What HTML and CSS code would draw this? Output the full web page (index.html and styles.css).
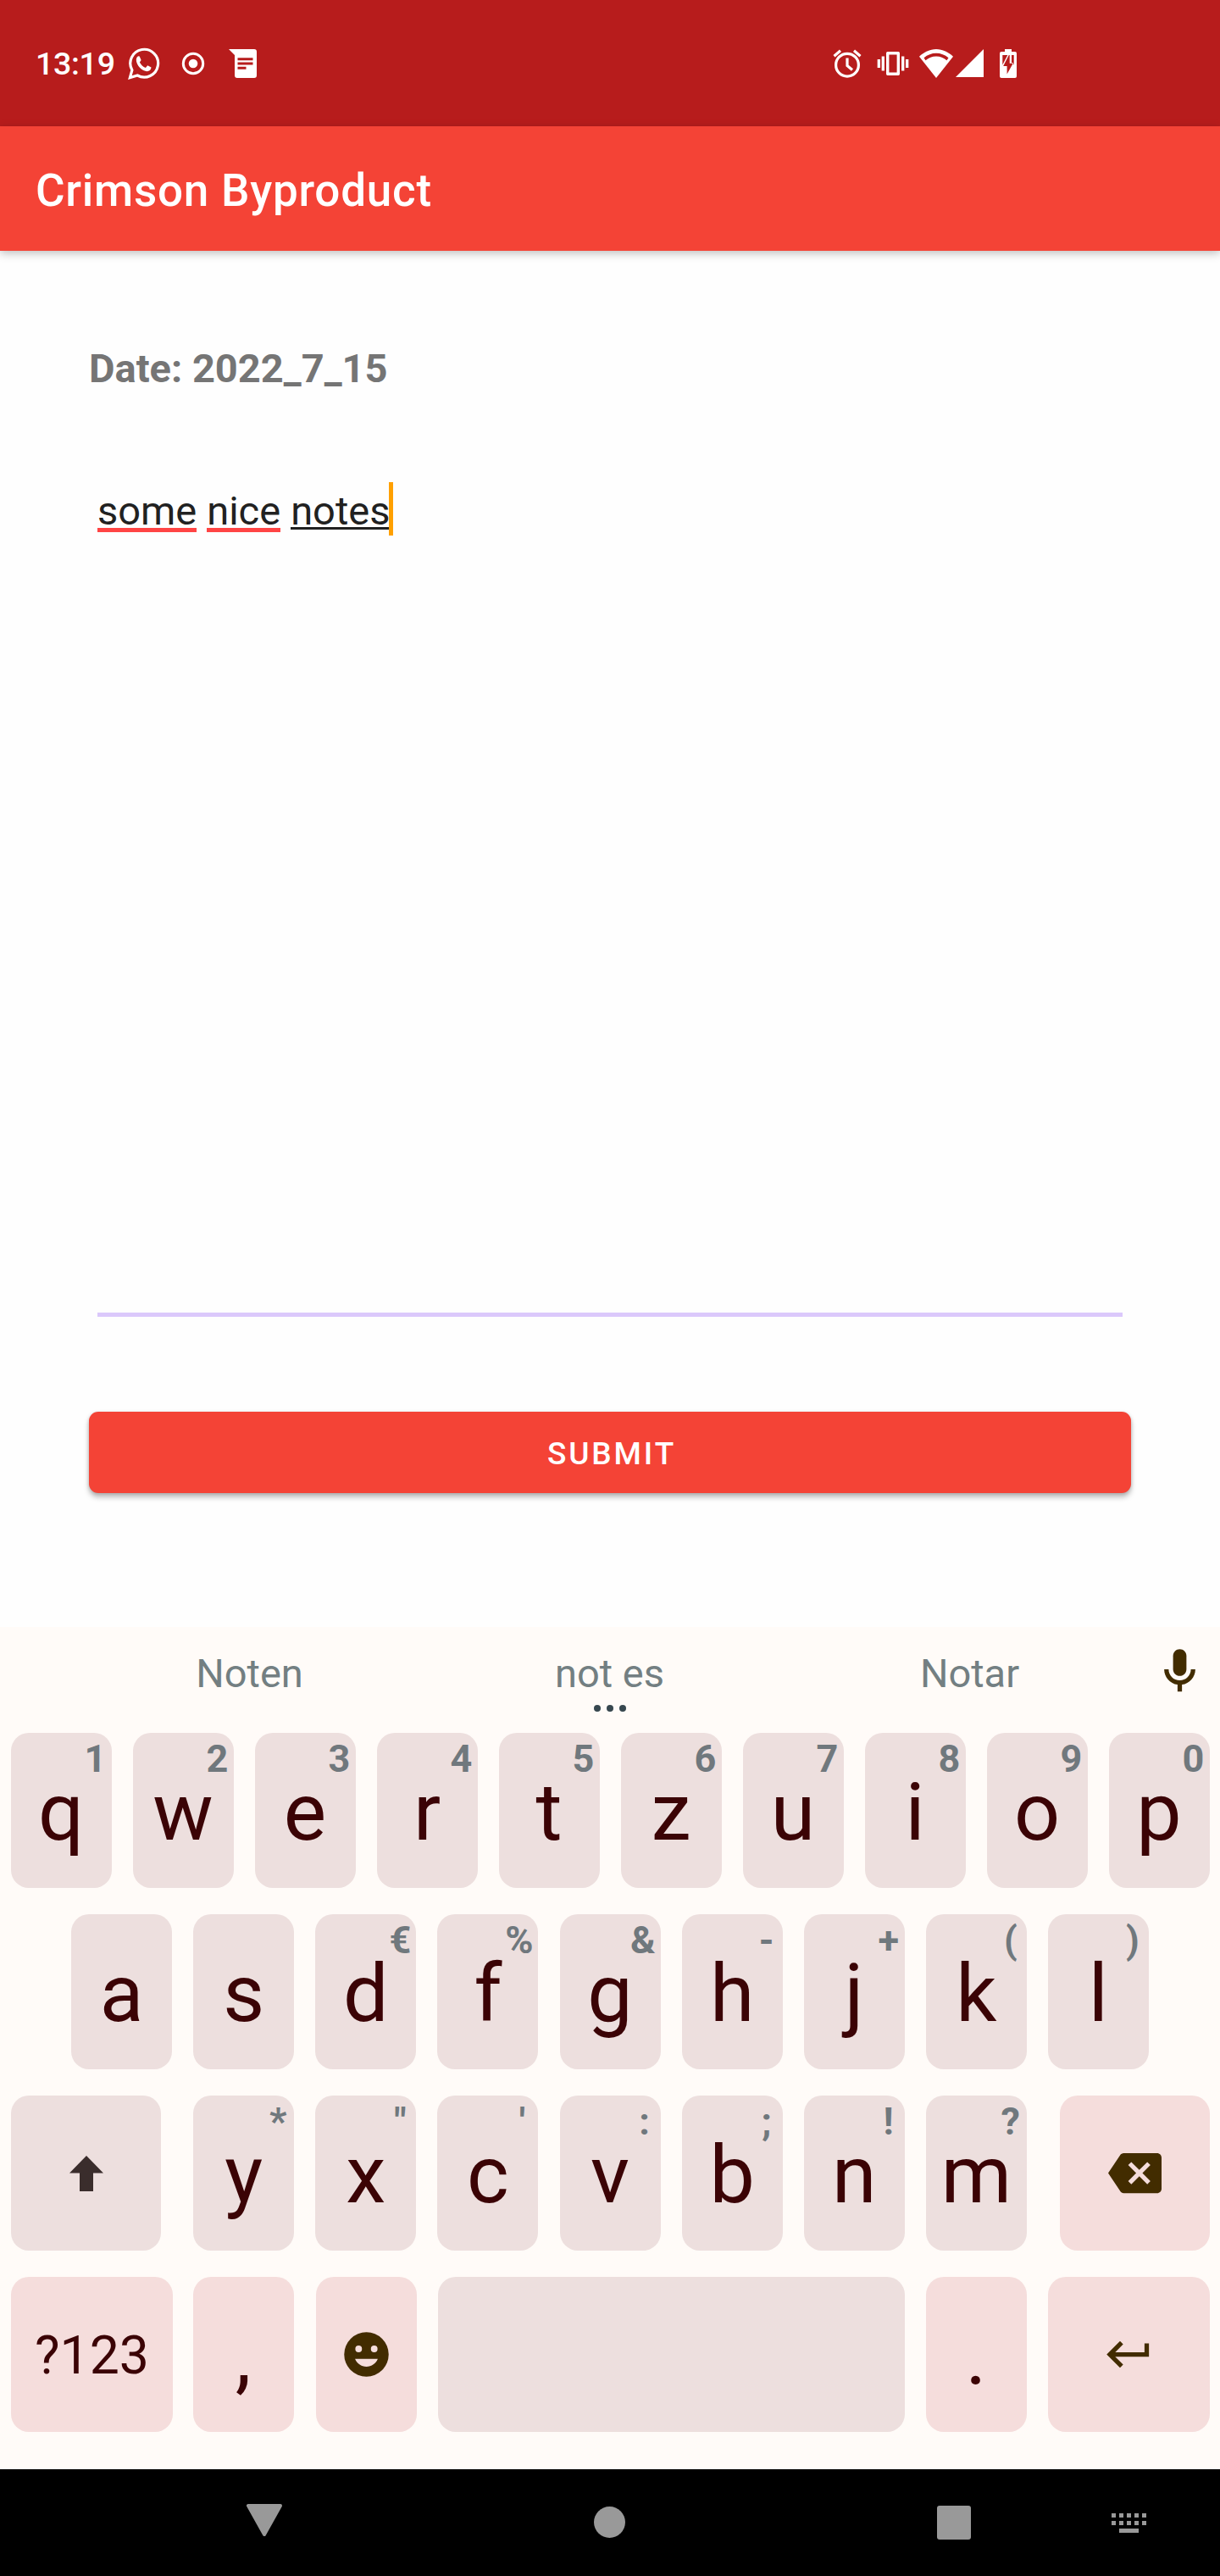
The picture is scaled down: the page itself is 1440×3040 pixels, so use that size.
FILE: index.html
```html
<!DOCTYPE html>
<html lang="en">
<head>
<meta charset="utf-8">
<title>Crimson Byproduct</title>
<link rel="stylesheet" href="styles.css">
</head>
<body>
<div class="status-bar">
  <span class="clock">13:19</span>
  <svg class="ic-whatsapp" viewBox="0 0 38 38" width="38" height="38"><path d="M2.400 35.600l2.500-8.900A16.400 16.400 0 1 1 11.200 33z" fill="none" stroke="#fff" stroke-width="3.200"/><path d="M12.200 10.200c-.8.3-2.400 1.900-2.400 4.400 0 7 7.500 13.600 12.700 13.600 2.600 0 4.900-1.500 5-4.600l-4.300-2.300-2.300 2.600c-3-1.200-5.600-3.600-7-6.500l1.700-2.300-1.900-4.700z" fill="#fff"/></svg>
  <svg class="ic-record" viewBox="0 0 28 28" width="28" height="28"><circle cx="14" cy="14" r="11.700" fill="none" stroke="#fff" stroke-width="3"/><circle cx="14" cy="14" r="5.300" fill="#fff"/></svg>
  <svg class="ic-message" viewBox="0 0 34 34" width="34" height="34"><path d="M0 0h30a3 3 0 0 1 3 3v28a3 3 0 0 1-3 3H10a3 3 0 0 1-3-3V7z" fill="#fff"/><path d="M10.500 11.700h18M10.500 17h18M10.500 22.200h10" stroke="#b71c1c" stroke-width="3"/></svg>
  <span class="spacer"></span>
  <svg class="ic-alarm" viewBox="0 0 34 34" width="34" height="34"><g fill="none" stroke="#fff" stroke-width="3.200"><circle cx="17" cy="18.700" r="13.400"/><path d="M1.500 8.200l7.500-6.400M32.500 8.200L25 1.800M17 10.500v9l6 5"/></g></svg>
  <svg class="ic-vibrate" viewBox="0 0 38 28" width="38" height="28"><path d="M12.700 1.800h12.600v24.400H12.700z" fill="none" stroke="#fff" stroke-width="3.400" stroke-linejoin="round"/><path d="M2.300 9v10M7.300 5.500v17M30.700 5.500v17M35.700 9v10" stroke="#fff" stroke-width="3.300"/></svg>
  <svg class="ic-wifi" viewBox="0 0 40 34" width="40" height="34"><path d="M20 34L0 8.700C5.500 3.500 12.400 0 20 0s14.500 3.500 20 8.700z" fill="#fff"/><path d="M5.500 10.200Q12 4.700 20 4.700t14.500 5.500l-2 3Q27 8.500 20 8.500T7.500 13.200z" fill="#b71c1c"/></svg>
  <svg class="ic-signal" viewBox="0 0 33 33" width="33" height="33"><path d="M33 0v33H0z" fill="#fff"/></svg>
  <svg class="ic-battery" viewBox="0 0 20 34" width="20" height="34"><path d="M6 0h8v3h4a2 2 0 0 1 2 2v27a2 2 0 0 1-2 2H2a2 2 0 0 1-2-2V5a2 2 0 0 1 2-2h4z" fill="#fff"/><path d="M3.300 7h6L3.300 18.500zM11.700 7v9.700h4L8.600 29.500V20H4.200L10.800 7zM14 7h2.700v12L15.600 16H14z" fill="#b71c1c"/></svg>
</div>
<header class="app-bar"><h1>Crimson Byproduct</h1></header>
<main class="form">
  <p class="date">Date: 2022_7_15</p>
  <div class="notes"><span class="bad">some</span> <span class="bad">nice</span> <span class="composing">notes</span><i class="caret"></i></div>
  <button class="submit">SUBMIT</button>
</main>
<section class="keyboard">
  <div class="suggestions">
    <span>Noten</span><span class="more">not es<svg viewBox="0 0 38 8" width="38" height="8" fill="#37474f"><circle cx="4" cy="4" r="4"/><circle cx="19" cy="4" r="4"/><circle cx="34" cy="4" r="4"/></svg></span><span>Notar</span>
    <svg class="mic" viewBox="0 0 24 24" width="63" height="63" fill="#422c00"><path d="M12 14c1.660 0 3-1.340 3-3V5c0-1.660-1.340-3-3-3S9 3.340 9 5v6c0 1.660 1.340 3 3 3z"/><path d="M17 11c0 2.760-2.240 5-5 5s-5-2.240-5-5H5c0 3.530 2.610 6.430 6 6.920V21h2v-3.080c3.390-.49 6-3.390 6-6.920h-2z"/></svg>
  </div>
  <div class="row">
    <div class="key">q<sup>1</sup></div><div class="key">w<sup>2</sup></div><div class="key">e<sup>3</sup></div><div class="key">r<sup>4</sup></div><div class="key">t<sup>5</sup></div><div class="key">z<sup>6</sup></div><div class="key">u<sup>7</sup></div><div class="key">i<sup>8</sup></div><div class="key">o<sup>9</sup></div><div class="key">p<sup>0</sup></div>
  </div>
  <div class="row home">
    <div class="key">a</div><div class="key">s</div><div class="key">d<sup>€</sup></div><div class="key">f<sup>%</sup></div><div class="key">g<sup>&amp;</sup></div><div class="key">h<sup>-</sup></div><div class="key">j<sup>+</sup></div><div class="key">k<sup>(</sup></div><div class="key">l<sup>)</sup></div>
  </div>
  <div class="row spread">
    <div class="key icon shift"><svg viewBox="0 0 40 42" width="40" height="42" fill="#3a2d2c"><path d="M20 0l20 20.500H28V42H12V20.500H0z"/></svg></div>
    <div class="letters"><div class="key">y<sup>*</sup></div><div class="key">x<sup>"</sup></div><div class="key">c<sup>'</sup></div><div class="key">v<sup>:</sup></div><div class="key">b<sup>;</sup></div><div class="key">n<sup>!</sup></div><div class="key">m<sup>?</sup></div></div>
    <div class="key icon shift alt"><svg viewBox="0 0 24 24" width="63" height="63" fill="#422c00"><path d="M22 3H7c-.69 0-1.230.35-1.590.88L0 12l5.410 8.110c.36.53.9.89 1.590.89h15c1.100 0 2-.9 2-2V5c0-1.100-.9-2-2-2zm-3 12.590L17.590 17 14 13.410 10.410 17 9 15.590 12.590 12 9 8.410 10.410 7 14 10.590 17.590 7 19 8.410 15.410 12 19 15.590z"/></svg></div>
  </div>
  <div class="row">
    <div class="key wide alt symbols">?123</div>
    <div class="key alt comma">,</div>
    <div class="key icon alt"><svg viewBox="0 0 24 24" width="63" height="63" fill="#422c00"><path d="M12 2a10 10 0 1 0 0 20 10 10 0 0 0 0-20zM15.500 8a1.500 1.500 0 1 1 0 3 1.500 1.500 0 0 1 0-3zM8.500 8a1.500 1.500 0 1 1 0 3 1.500 1.500 0 0 1 0-3zM12 17.500c-2.330 0-4.310-1.460-5.110-3.500h10.220c-.8 2.040-2.780 3.500-5.110 3.500z"/></svg></div>
    <div class="key space"></div>
    <div class="key alt">.</div>
    <div class="key icon wide alt"><svg viewBox="0 0 24 24" width="63" height="63" fill="#422c00"><path d="M19 7v4H5.830l3.580-3.590L8 6l-6 6 6 6 1.410-1.410L5.830 13H21V7z"/></svg></div>
  </div>
</section>
<nav class="nav-bar">
  <svg class="nav-back" viewBox="0 0 42 38" width="42" height="38"><path d="M2 2h38L21 36z" fill="#999" stroke="#999" stroke-width="4" stroke-linejoin="round"/></svg>
  <svg class="nav-home" viewBox="0 0 37 37" width="37" height="37"><circle cx="18.500" cy="18.500" r="18.500" fill="#999"/></svg>
  <svg class="nav-recent" viewBox="0 0 40 40" width="40" height="40"><rect width="40" height="40" rx="3" fill="#999"/></svg>
  <svg class="nav-ime" viewBox="0 0 41 23" width="41" height="23"><path d="M0 2.500h41M0 11.500h41" stroke="#999" stroke-width="5" stroke-dasharray="5 4"/><path d="M9 20.500h23" stroke="#999" stroke-width="5"/></svg>
</nav>
</body>
</html>
```
FILE: styles.css
```css
* { box-sizing: border-box; }
body {
  margin: 0;
  width: 1440px;
  height: 3040px;
  display: flex;
  flex-direction: column;
  background: #fefefe;
  font-family: Roboto, sans-serif;
}
svg { display: block; flex: none; }

.status-bar {
  height: 149px;
  background: #b71c1c;
  display: flex;
  align-items: center;
  padding: 0 240px 0 42px;
}
.clock {
  width: 109px;
  padding-top: 1px;
  font-size: 37.500px;
  font-weight: 500;
  line-height: 44px;
  letter-spacing: -0.3px;
  color: #fff;
}
.ic-record { margin-left: 25px; }
.ic-message { margin-left: 28px; }
.spacer { flex: 1; }
.ic-vibrate { margin-left: 18px; }
.ic-wifi { margin-left: 12px; }
.ic-signal { margin-left: 3px; }
.ic-battery { margin-left: 19px; }

.app-bar {
  height: 147px;
  background: #f44336;
  display: flex;
  align-items: center;
  padding: 4px 42px 0;
  box-shadow: 0 3px 10px rgba(0, 0, 0, 0.25);
}
.app-bar h1 {
  margin: 0;
  font-size: 53px;
  font-weight: 500;
  line-height: 62px;
  letter-spacing: 0.75px;
  color: #fff;
}

.form {
  height: 1624px;
  padding: 107px 105px 0;
}
.date {
  margin: 0;
  font-size: 47px;
  font-weight: 700;
  line-height: 64px;
  color: #757575;
}
.notes {
  margin: 102px 10px 0;
  height: 985px;
  border-bottom: 5px solid #dbc8fb;
  display: flex;
  align-items: flex-start;
  gap: 12px;
  font-size: 47px;
  line-height: 63px;
  color: #212121;
}
.notes span { height: 59px; line-height: 67px; }
.bad { border-bottom: 5px solid #ff4444; }
.notes .composing { height: 56px; border-bottom: 3px solid #212121; }
.caret {
  width: 5px;
  height: 63px;
  margin-left: -13px;
  background: #ffa000;
}
.submit {
  display: block;
  width: 1230px;
  height: 96px;
  margin-top: 112px;
  padding: 3px 0 0 4px;
  border: 0;
  border-radius: 11px;
  background: #f44336;
  box-shadow: 0 5px 6px rgba(0, 0, 0, 0.25), 0 1px 4px rgba(0, 0, 0, 0.15);
  font: 500 37px/44px Roboto, sans-serif;
  letter-spacing: 2.9px;
  color: #fff;
}

.keyboard {
  height: 994px;
  background: #fffbf8;
  display: flex;
  flex-direction: column;
  gap: 31px;
}
.suggestions {
  height: 94px;
  padding: 0 15px 0 82px;
  display: flex;
  align-items: flex-start;
}
.suggestions span {
  width: 425px;
  padding-top: 27px;
  text-align: center;
  font-size: 47px;
  line-height: 56px;
  color: #737f82;
}
.suggestions .more { position: relative; }
.more svg { position: absolute; left: 194px; top: 92px; }
.mic { margin-top: 21px; margin-left: 4px; }
.row {
  height: 183px;
  display: flex;
  justify-content: center;
  gap: 25px;
}
.row.home { gap: 25.100px; }
.row.spread { justify-content: space-between; padding: 0 12px 0 13px; gap: 0; }
.letters { display: flex; gap: 25.100px; margin-right: 1px; }
.key {
  position: relative;
  width: 119px;
  padding-top: 4px;
  border-radius: 21px;
  background: #eddfde;
  display: flex;
  align-items: center;
  justify-content: center;
  font-size: 95px;
  line-height: 112px;
  color: #3b0305;
}
.key sup {
  position: absolute;
  right: 6px;
  top: 5px;
  min-width: 26px;
  text-align: center;
  font-size: 45px;
  font-weight: 700;
  line-height: 52px;
  color: #70787d;
}
.icon { padding-top: 0; }
.shift { width: 177px; }
.wide { width: 191px; }
.space { width: 551px; }
.alt { background: #f5dddc; }
.comma { margin: 0 1px 0 -1px; }
.symbols { padding: 2px 0 0 1px; font-size: 62.500px; line-height: 74px; }

.nav-bar {
  flex: 1;
  background: #000;
  display: flex;
  padding: 41px 0 0 291px;
}
.nav-home { margin: 3px 0 0 368px; }
.nav-recent { margin: 2px 0 0 368px; }
.nav-ime { margin: 11px 0 0 166px; }
```
